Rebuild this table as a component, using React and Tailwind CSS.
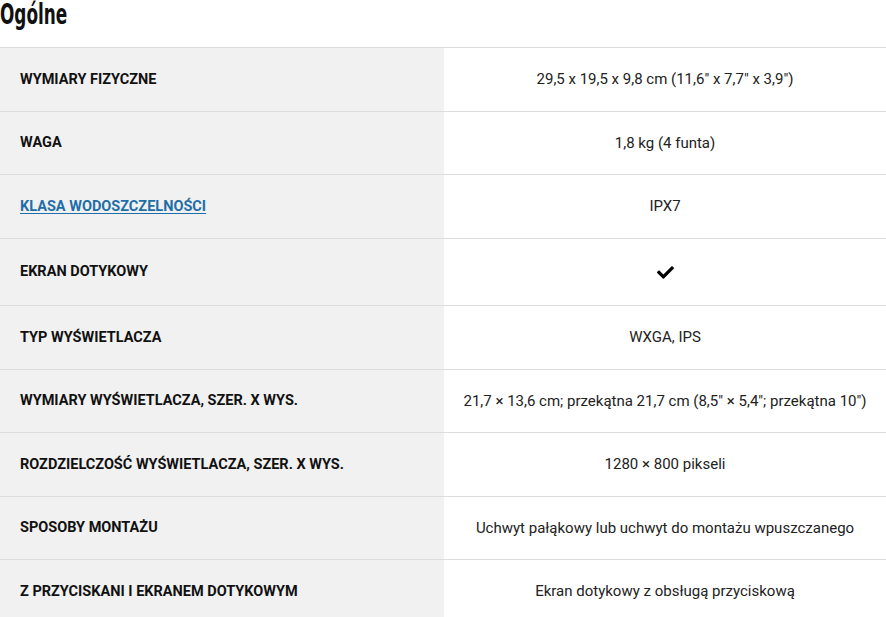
const rows = [
  { label: 'Wymiary fizyczne', value: '29,5 x 19,5 x 9,8 cm (11,6" x 7,7" x 3,9")', h: 'h-[64px]' },
  { label: 'Waga', value: '1,8 kg (4 funta)', h: 'h-[63px]' },
  { label: 'Klasa wodoszczelności', value: 'IPX7', h: 'h-[64px]', link: true },
  { label: 'Ekran dotykowy', check: true, h: 'h-[67px]' },
  { label: 'Typ wyświetlacza', value: 'WXGA, IPS', h: 'h-[64px]' },
  { label: 'Wymiary wyświetlacza, szer. x wys.', value: '21,7 × 13,6 cm; przekątna 21,7 cm (8,5" × 5,4"; przekątna 10")', h: 'h-[63px]' },
  { label: 'Rozdzielczość wyświetlacza, szer. x wys.', value: '1280 × 800 pikseli', h: 'h-[64px]' },
  { label: 'Sposoby montażu', value: 'Uchwyt pałąkowy lub uchwyt do montażu wpuszczanego', h: 'h-[63px]' },
  { label: 'Z przyciskani i ekranem dotykowym', value: 'Ekran dotykowy z obsługą przyciskową', h: 'h-[64px]' },
]

function Check() {
  return (
    <svg viewBox="0 0 512 512" className="w-[17px] h-[17px]" fill="#000">
      <path d="M173.9 439.4l-166.4-166.4c-10-10-10-26.2 0-36.2l36.2-36.2c10-10 26.2-10 36.2 0L192 312.7 432.1 72.6c10-10 26.2-10 36.2 0l36.2 36.2c10 10 10 26.2 0 36.2L210.1 439.4c-10 10-26.2 10-36.2 0z" />
    </svg>
  )
}

export default function App() {
  return (
    <div className="w-[886px] h-[617px] overflow-hidden bg-white font-['Roboto',sans-serif] text-[15px] text-[#111]">
      <h2 className="h-[47px] text-[28px] leading-[30px] font-bold text-[#111] font-['DejaVu_Sans_Condensed','Liberation_Sans_Narrow',sans-serif] [font-stretch:condensed] scale-x-[0.67] origin-left">
        Ogólne
      </h2>
      <div>
        {rows.map((row) => (
          <div key={row.label} className={`flex border-t border-[#dddddd] ${row.h}`}>
            <div className="w-[444px] shrink-0 bg-[#f1f1f1] flex items-center pl-[20px] text-[14.5px]">
              {row.link ? (
                <a href="#" className="font-bold uppercase text-[#1f6ea7] underline underline-offset-2">
                  {row.label}
                </a>
              ) : (
                <span className="font-bold uppercase">{row.label}</span>
              )}
            </div>
            <div className="flex-1 flex items-center justify-center text-[#222]">
              {row.check ? <Check /> : row.value}
            </div>
          </div>
        ))}
      </div>
    </div>
  )
}
